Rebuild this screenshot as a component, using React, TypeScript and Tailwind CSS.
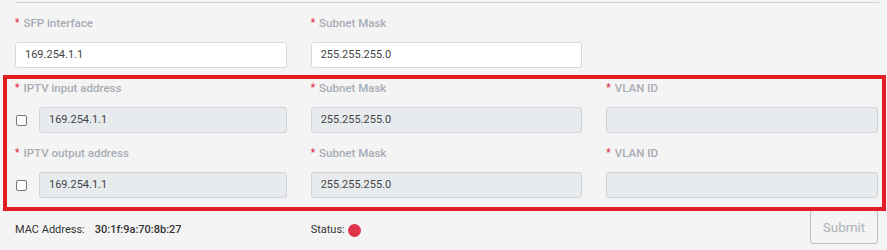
const font = { fontFamily: 'Roboto, "Liberation Sans", sans-serif' };

const Label = ({ text }: { text: string }) => (
  <div className="flex items-center h-4 text-[11.5px] font-medium text-[#a7acb4] leading-4">
    <span className="text-[#e0304a] mr-[4px] text-[10px]">*</span>
    <span>{text}</span>
  </div>
);

const Input = ({ value, disabled }: { value: string; disabled?: boolean }) => (
  <div
    className={
      disabled
        ? 'h-[26px] flex-1 flex items-center px-[9px] rounded-[3px] border border-[#cfd3d8] bg-[#e8ebee] text-[11px] text-[#444]'
        : 'h-[26px] flex-1 flex items-center px-[9px] rounded-[3px] border border-[#d6d9dd] bg-white text-[11px] text-[#444]'
    }
  >
    {value}
  </div>
);

const Field = ({ label, value, disabled, check }: { label: string; value: string; disabled?: boolean; check?: boolean }) => (
  <div className="flex flex-col gap-[11px]">
    <Label text={label} />
    <div className="flex items-center">
      {check && <div className="w-[11px] h-[11px] ml-[1px] mr-[12px] rounded-[2px] border border-[#767676] bg-white" />}
      <Input value={value} disabled={disabled} />
    </div>
  </div>
);

export default function App() {
  return (
    <div className="w-[887px] h-[250px] bg-[#f4f4f4] px-[15px] pt-[2px] overflow-hidden" style={font}>
      <div className="h-px w-[864px] bg-[#cfcfcf]" />
      <div className="grid grid-cols-3 gap-x-[24px] w-[863px] mt-[12px]">
        <Field label="SFP interface" value="169.254.1.1" />
        <Field label="Subnet Mask" value="255.255.255.0" />
        <div />
      </div>
      <div className="relative w-[863px] mt-[12px]">
        <div className="absolute top-[-5px] left-[-12px] right-[-8px] bottom-[-13px] border-[4px] border-[#e41c23] pointer-events-none" />
        <div className="grid grid-cols-3 gap-x-[24px] gap-y-[12px]">
          <Field label="IPTV input address" value="169.254.1.1" disabled check />
          <Field label="Subnet Mask" value="255.255.255.0" disabled />
          <Field label="VLAN ID" value="" disabled />
          <Field label="IPTV output address" value="169.254.1.1" disabled check />
          <Field label="Subnet Mask" value="255.255.255.0" disabled />
          <Field label="VLAN ID" value="" disabled />
        </div>
      </div>
      <div className="grid grid-cols-3 gap-x-[24px] w-[863px] mt-[12px]">
        <div className="flex items-center h-4 mt-[12px] text-[11px] text-[#333]">
          <span>MAC Address:</span>
          <span className="ml-[10px] font-medium">30:1f:9a:70:8b:27</span>
        </div>
        <div className="flex items-center h-4 mt-[12px] text-[11px] text-[#333]">
          <span>Status:</span>
          <span className="ml-[3px] w-[13px] h-[13px] rounded-full bg-[#e0344b]" />
        </div>
        <div className="flex justify-end">
          <button className="h-[34px] w-[68px] rounded-[3px] border border-[#b9bcc0] text-[13.5px] text-[#aeb1b6] bg-transparent">
            Submit
          </button>
        </div>
      </div>
    </div>
  );
}
